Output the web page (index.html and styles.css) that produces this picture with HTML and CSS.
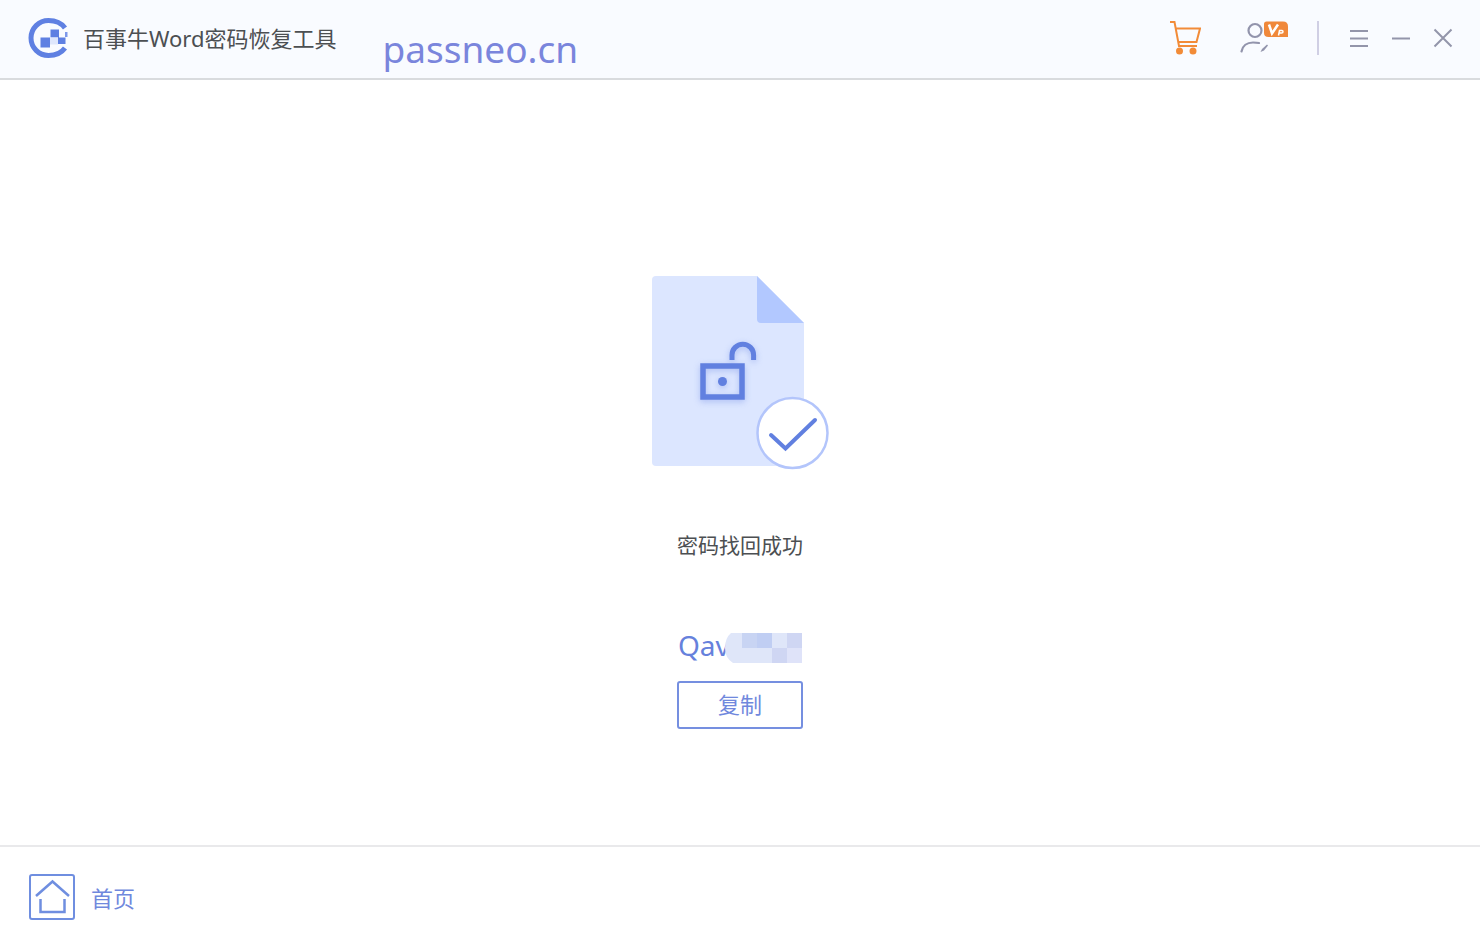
FILE: index.html
```html
<!DOCTYPE html>
<html lang="zh-CN">
<head>
    <meta charset="UTF-8">
    <meta name="viewport" content="width=device-width, initial-scale=1.0">
    <title>百事牛Word密码恢复工具</title>
    <link rel="stylesheet" href="styles.css">
</head>
<body>
    <header class="titlebar">
        <svg class="logo" width="40" height="40" viewBox="0 0 40 40">
            <path d="M37 10C33 4.500 28 2.500 20.500 2.500A17.500 17.500 0 0 0 20.500 37.500C28 37.500 33 35.500 37 30" fill="none" stroke="#5f80e2" stroke-width="5"/>
            <path d="M12.500 19.500H22v10h-9.500zM22.500 11.500H31v8h-8.500zM30 19.500h7.500V26H30z" fill="#5f80e2"/>
            <path d="M22 19.500h8v7h-8z" fill="#dfe7fc"/>
            <path d="M37 14h2.500v5H37z" fill="#7d98ea"/>
        </svg>
        <h1 class="app-name">百事牛Word密码恢复工具</h1>
        <a class="site" href="#">passneo.cn</a>

        <div class="tools">
            <button class="tool-btn cart-btn" type="button" aria-label="购买">
                <svg width="32" height="34" viewBox="0 0 32 34" fill="none" stroke="#f28b38" stroke-width="2">
                    <path d="M1 1h4.500L10 25h18M6.500 7.500H31L27.500 21H9.500"/>
                    <circle cx="10.500" cy="30" r="2.500" fill="#f28b38"/>
                    <circle cx="24" cy="30" r="2.500" fill="#f28b38"/>
                </svg>
            </button>
            <button class="tool-btn user-btn" type="button" aria-label="会员">
                <svg width="50" height="34" viewBox="0 0 50 34">
                    <g fill="none" stroke="#9294ac" stroke-width="2.200" stroke-linecap="round">
                        <circle cx="16" cy="9.500" r="6.500"/>
                        <path d="M2.500 30.500C3.500 25 8 21.500 14 21.500q4 0 6 .5"/>
                    </g>
                    <path d="M21.500 31l1.500-3 5-4.500 1 1-4 5z" fill="#9294ac"/>
                    <path d="M25 3q0-2.500 2.500-2.500h16.500q5 0 5 5V16H29.500q-4.500 0-4.500-4z" fill="#f0883a"/>
                    <path d="M30 3.500l3 9 6-9" fill="none" stroke="#fff" stroke-width="2.500"/>
                    <path d="M39.500 14.500l1-5h2.500q1 0 1 1.200t-1.500 1.300h-2.500" fill="none" stroke="#fff" stroke-width="1.500"/>
                </svg>
            </button>
            <span class="divider"></span>
            <button class="tool-btn menu-btn" type="button" aria-label="菜单">
                <svg width="20" height="20" viewBox="0 0 20 20" stroke="#9395aa" stroke-width="2">
                    <path d="M1 3h18M1 10.500h18M1 18h18"/>
                </svg>
            </button>
            <button class="tool-btn min-btn" type="button" aria-label="最小化">
                <svg width="20" height="20" viewBox="0 0 20 20" stroke="#9395aa" stroke-width="2">
                    <path d="M1 10.500h18"/>
                </svg>
            </button>
            <button class="tool-btn close-btn" type="button" aria-label="关闭">
                <svg width="20" height="20" viewBox="0 0 20 20" stroke="#9395aa" stroke-width="2">
                    <path d="M1.500 1.500l17 17M18.500 1.500l-17 17"/>
                </svg>
            </button>
        </div>
    </header>

    <main class="result">
        <svg class="doc" width="178" height="196" viewBox="0 0 178 196">
            <path d="M5 1H106L153 48V191H5q-4 0-4-4V5q0-4 4-4z" fill="#dce6ff"/>
            <path d="M106 1l47 47h-43q-4 0-4-4z" fill="#b2c8ff"/>
            <g class="lock" fill="none" stroke="#6180e0">
                <rect x="52" y="91" width="39" height="31" stroke-width="5.500"/>
                <path d="M81 85v-5a10.800 10.800 0 0 1 21.600 0v5" stroke-width="5"/>
                <circle cx="71.500" cy="106.500" r="4.500" fill="#6180e0" stroke="none"/>
            </g>
            <circle cx="141.500" cy="158" r="35" fill="#fff" stroke="#b3c5fb" stroke-width="2.500"/>
            <path d="M120 160l14.500 13.500L164 145" fill="none" stroke="#6180e0" stroke-width="4" stroke-linecap="round"/>
        </svg>
        <h2 class="message">密码找回成功</h2>
        <div class="password">
            Qav
            <svg class="mosaic" width="77" height="30" viewBox="0 0 77 30">
                <path d="M6 0H77V30H8Q0 25 0 15Q0 5 6 0z" fill="#dfe6f9"/>
                <path d="M17 0h15v15H17z" fill="#c8d4f3"/>
                <path d="M32 0h15v15H32z" fill="#c0cef3"/>
                <path d="M62 0h15v15H62zM47 15h15v15H47z" fill="#cfd6f3"/>
                <path d="M62 15h15v15H62z" fill="#dfe3f9"/>
            </svg>
        </div>
        <button class="copy-btn" type="button">复制</button>
    </main>

    <footer class="footer">
        <a class="home-link" href="#">
            <svg width="46" height="46" viewBox="0 0 46 46" fill="none" stroke="#6f8ee0" stroke-width="2">
                <rect x="1" y="1" width="44" height="44" rx="2"/>
                <path d="M7 22L23.500 7.500L40 22M11.500 25v13h24V25" stroke-width="2.500"/>
            </svg>
            <span>首页</span>
        </a>
    </footer>
</body>
</html>
```
FILE: styles.css
```css
* {
    box-sizing: border-box;
}

body {
    margin: 0;
    min-height: 100vh;
    display: flex;
    flex-direction: column;
    font-family: "Noto Sans", "Noto Sans CJK SC", sans-serif;
    font-size: 22px;
    color: #4c4f52;
    background-color: #fff;
}

svg {
    display: block;
}

h1, h2 {
    margin: 0;
    font-weight: normal;
}

a {
    text-decoration: none;
}

button {
    font-family: inherit;
    font-size: inherit;
    cursor: pointer;
}

.titlebar {
    display: flex;
    align-items: center;
    height: 80px;
    padding: 0 27px 2px 28px;
    background-color: #f9fbff;
    border-bottom: 2px solid #d9dbde;
}

.app-name {
    margin-left: 15px;
    font-size: 22px;
    line-height: 32px;
}

.site {
    margin-left: 46px;
    padding-top: 22px;
    font-size: 37px;
    line-height: 48px;
    color: #7a85dc;
}

.tools {
    display: flex;
    align-items: center;
    margin-left: auto;
}

.tool-btn {
    padding: 0;
    border: none;
    background: none;
}

.user-btn {
    margin-left: 38px;
}

.divider {
    width: 2px;
    height: 34px;
    margin: 0 30px 0 28px;
    background-color: #d0cfe4;
}

.min-btn,
.close-btn {
    margin-left: 22px;
}

.result {
    flex: 1;
    display: flex;
    flex-direction: column;
    align-items: center;
    padding: 195px 0 60px;
}

.lock {
    filter: drop-shadow(0 2px 3px rgba(97, 128, 224, 0.4));
}

.message {
    margin-top: 58px;
    font-size: 21px;
    line-height: 32px;
}

.password {
    position: relative;
    width: 124px;
    margin-top: 64px;
    padding-right: 60px;
    font-size: 28px;
    line-height: 40px;
    color: #6681dc;
}

.mosaic {
    position: absolute;
    top: 8px;
    right: 0;
}

.copy-btn {
    width: 126px;
    height: 48px;
    margin-top: 16px;
    padding: 0 0 4px;
    border: 2px solid #758fe0;
    border-radius: 3px;
    background-color: #fff;
    color: #7088dd;
}

.copy-btn:hover {
    background-color: #f4f7ff;
}

.footer {
    display: flex;
    align-items: center;
    height: 102px;
    padding: 0 29px;
    border-top: 2px solid #e9e9eb;
}

.home-link {
    display: flex;
    align-items: center;
    gap: 16px;
    color: #7088dd;
}
```
